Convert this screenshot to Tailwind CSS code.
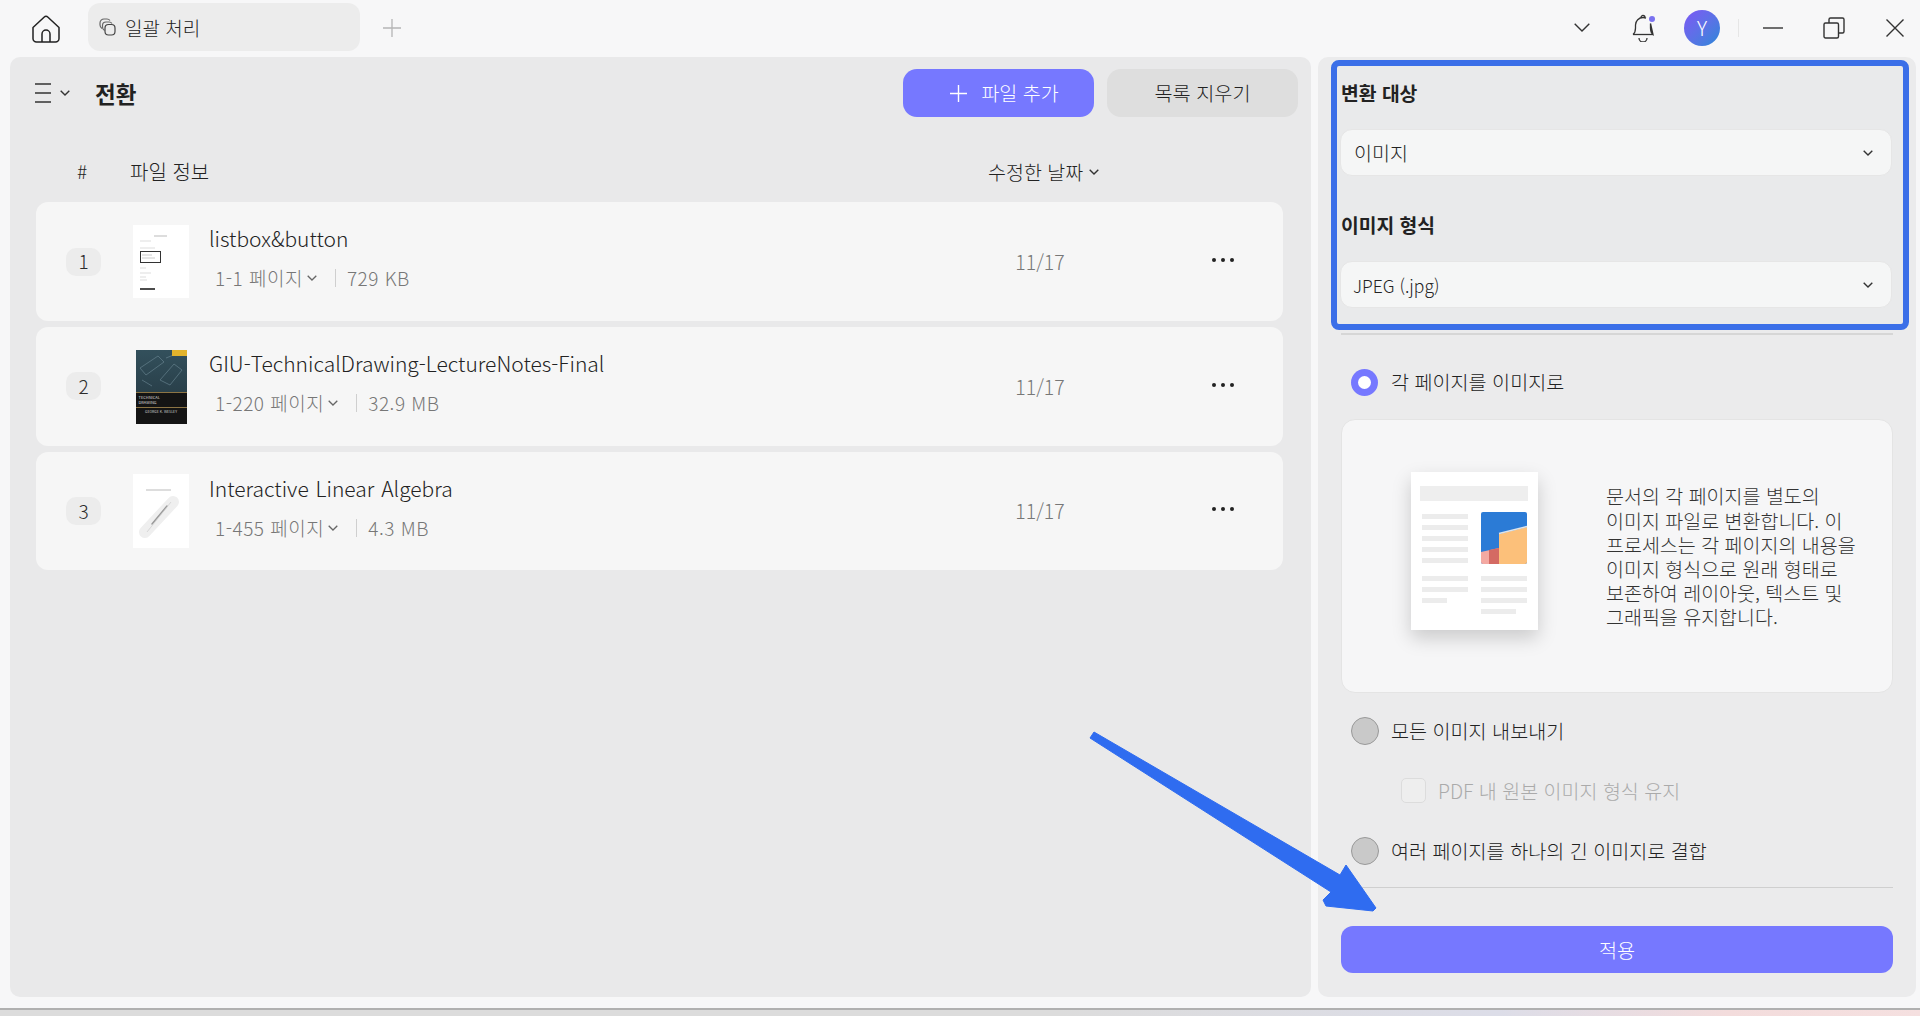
<!doctype html>
<html lang="ko">
<head>
<meta charset="utf-8">
<script src="https://cdn.jsdelivr.net/npm/@tailwindcss/browser@4"></script>
</head>
<body class="m-0 overflow-hidden">
<div class="relative w-[1920px] h-[1016px] bg-[#f7f7f8] flex flex-col overflow-hidden text-[#2b2b2b] font-['Noto_Sans_CJK_KR','Noto_Sans',sans-serif]">

  <!-- title bar -->
  <header class="h-[57px] flex items-center shrink-0">
    <svg class="ml-[32px] w-[28px] h-[28px]" viewBox="0 0 28 28" fill="none" stroke="#222" stroke-width="1.5" stroke-linejoin="round"><path d="M1 12.500 12 2.200a3 3 0 0 1 4 0L27 12.500V23.500a3.500 3.500 0 0 1-3.500 3.500H4.500A3.500 3.500 0 0 1 1 23.500Z"/><path d="M10 27V19a4 4 0 0 1 8 0V27"/></svg>
    <div class="ml-[28px] w-[272px] h-[48px] -mt-[3px] rounded-[12px] bg-[#ececec] flex items-center pl-[10px] gap-[9px]">
      <svg class="w-[18px] h-[18px] shrink-0" viewBox="0 0 18 18" fill="none" stroke="#666" stroke-width="1.2"><path d="M4 10.500A4.500 4.500 0 0 1 2 7V5a4 4 0 0 1 4-4h3a4 4 0 0 1 3 1.500"/><path d="M6.500 12.500A4 4 0 0 1 4.500 9V7.500a3.500 3.500 0 0 1 3.500-3.500h3a3.500 3.500 0 0 1 3 1.500"/><rect x="7" y="6.500" width="10" height="10.500" rx="3.500" stroke="#444"/></svg>
      <span class="text-[19px] leading-none font-light text-[#222]">일괄 처리</span>
    </div>
    <svg class="ml-[23px] -mt-[2px] w-[18px] h-[18px]" viewBox="0 0 18 18" stroke="#b5b5b5" stroke-width="1.3"><path d="M9 0V18M0 9H18"/></svg>
    <div class="ml-auto -mt-[2px] flex items-center">
      <svg class="w-[16px] h-[9px] mr-[42px]" viewBox="0 0 16 9" fill="none" stroke="#333" stroke-width="1.4"><path d="M.7.700 8 8l7.300-7.300"/></svg>
      <div class="relative mr-[30px] w-[22px] h-[28px]">
        <svg class="w-[22px] h-[28px]" viewBox="0 0 22 28" fill="none" stroke="#333" stroke-width="1.3"><path d="M1 20.500c2-1.500 2.500-3 2.500-6.500V11A7.500 7.500 0 0 1 11 3.500a7 7 0 0 1 3 .6M18.500 9.500V14c0 3.500.5 5 2.500 6.500Z"/><path d="M1 20.500H21"/><path d="M9 3.500a2 2 0 0 1 4 0"/><path d="M7 24a4 4 0 0 0 8 0"/></svg>
        <span class="absolute right-[-1px] top-[2px] w-[6px] h-[6px] rounded-full bg-[#7a72f0]"></span>
      </div>
      <div class="w-[36px] h-[36px] rounded-full bg-linear-to-br from-[#7b56f5] to-[#1f86d8] text-white flex items-center justify-center text-[20px] font-light">Y</div>
      <span class="ml-[18px] w-px h-[18px] bg-[#e6e6e6]"></span>
      <svg class="ml-[24px] w-[20px] h-[2px]" viewBox="0 0 20 2"><path d="M0 1H20" stroke="#333" stroke-width="1.4"/></svg>
      <svg class="ml-[40px] w-[22px] h-[22px]" viewBox="0 0 22 22" fill="none" stroke="#333" stroke-width="1.4"><rect x="1" y="6" width="14.500" height="15" rx="1.500"/><path d="M6 6V2.500A1.500 1.500 0 0 1 7.500 1H19.500A1.500 1.500 0 0 1 21 2.500V14.500A1.500 1.500 0 0 1 19.500 16H15.500"/></svg>
      <svg class="ml-[41px] mr-[16px] w-[18px] h-[18px]" viewBox="0 0 18 18" stroke="#333" stroke-width="1.4"><path d="M.5.5 17.500 17.500M17.500.5.5 17.500"/></svg>
    </div>
  </header>

  <!-- body -->
  <main class="h-[940px] shrink-0 flex pl-[10px] pr-[4px] gap-[7px]">
    <!-- left panel -->
    <section class="w-[1301px] rounded-[10px] bg-[#e9e9ea] flex flex-col">
      <div class="h-[60px] mt-[6px] flex items-center pl-[25px] pr-[13px] shrink-0">
        <svg class="w-[16px] h-[20px]" viewBox="0 0 16 20" stroke="#333" stroke-width="1.4"><path d="M0 1H16M0 10H16M0 19H16"/></svg>
        <svg class="ml-[9px] w-[10px] h-[6px]" viewBox="0 0 10 6" fill="none" stroke="#333" stroke-width="1.4"><path d="M.7.700 5 5 9.300.700"/></svg>
        <h1 class="ml-[25px] text-[22.500px] font-bold leading-none text-[#222]">전환</h1>
        <button class="ml-auto w-[191px] h-[48px] rounded-[14px] bg-[#7678ff] text-white text-[19.500px] font-light flex items-center justify-center gap-[14px] pl-[12px]">
          <svg class="w-[17px] h-[17px]" viewBox="0 0 17 17" stroke="#fff" stroke-width="1.4"><path d="M8.500 0V17M0 8.500H17"/></svg>파일 추가
        </button>
        <button class="ml-[13px] w-[191px] h-[48px] rounded-[14px] bg-[#dedede] text-[#222] text-[19.700px] font-light">목록 지우기</button>
      </div>
      <div class="h-[79px] pt-[18px] flex items-center font-light text-[#222] shrink-0">
        <span class="ml-[67px] w-[53px] text-[19px]">#</span>
        <span class="w-[858px] text-[20px]">파일 정보</span>
        <span class="text-[19.500px]">수정한 날짜</span>
        <svg class="ml-[6px] w-[10px] h-[6px]" viewBox="0 0 10 6" fill="none" stroke="#333" stroke-width="1.4"><path d="M.7.700 5 5 9.300.700"/></svg>
      </div>
      <div class="ml-[26px] w-[1247px] flex flex-col gap-[6px]">

        <article class="h-[119px] rounded-[12px] bg-[#f6f6f6] flex items-center">
          <span class="ml-[30px] w-[35px] h-[28px] rounded-[10px] bg-[#ececec] flex items-center justify-center text-[19px] font-light">1</span>
          <div class="ml-[32px] w-[56px] h-[73px] bg-white shrink-0 flex items-start justify-center">
            <svg class="w-[56px] h-[73px] blur-[0.4px]" viewBox="0 0 56 73" fill="none"><path d="M21 11H34" stroke="#bbb"/><path d="M7 16H18M7 23H22" stroke="#ddd"/><rect x="7.500" y="26.500" width="20" height="11" stroke="#333" stroke-width="1"/><path d="M9 30H19M9 33H22" stroke="#ccc"/><path d="M7 43H13M7 48H18M7 52H13M7 55H14" stroke="#ddd"/><path d="M7 64H22" stroke="#111" stroke-width="1.500"/></svg>
          </div>
          <div class="ml-[20px] flex-1 min-w-0 self-stretch flex flex-col justify-center pb-[9px]">
            <h2 class="text-[21px] leading-[28px] font-light text-[#222]">listbox&amp;button</h2>
            <p class="mt-[14px] ml-[6px] flex items-center text-[19px] tracking-[0.5px] leading-[24px] font-light text-[#777]">1-1 페이지<svg class="ml-[4px] w-[10px] h-[6px]" viewBox="0 0 10 6" fill="none" stroke="#666" stroke-width="1.3"><path d="M.7.700 5 5 9.300.700"/></svg><span class="ml-[18px] mr-[11px] w-px h-[18px] bg-[#cfcfcf]"></span>729 KB</p>
          </div>
          <span class="w-[120px] text-center text-[19.500px] font-light text-[#777]">11/17</span>
          <span class="ml-[112px] mr-[49px] w-[22px] flex justify-between -mt-[4px]"><i class="w-[4px] h-[4px] rounded-full bg-[#222]"></i><i class="w-[4px] h-[4px] rounded-full bg-[#222]"></i><i class="w-[4px] h-[4px] rounded-full bg-[#222]"></i></span>
        </article>

        <article class="h-[119px] rounded-[12px] bg-[#f6f6f6] flex items-center">
          <span class="ml-[30px] w-[35px] h-[28px] -mt-[1px] rounded-[10px] bg-[#ececec] flex items-center justify-center text-[19px] font-light">2</span>
          <div class="ml-[32px] w-[56px] h-[74px] shrink-0 flex justify-center">
            <div class="relative w-[51px] h-[74px] bg-linear-to-b from-[#33505c] to-[#22343d] overflow-hidden">
              <svg class="w-[51px] h-[44px]" viewBox="0 0 51 44" fill="none" stroke="#6d8a95" stroke-width=".6"><path d="M4 18 22 6l6 6-18 13ZM24 30l14-16 8 6-12 15ZM6 30l10 6M30 8l10-4"/></svg>
              <span class="absolute right-0 top-0 w-[15px] h-[6px] bg-[#e2b32c]"></span>
              <div class="absolute left-0 right-0 top-[42px] bottom-0 bg-[#141414] border-t border-t-[#8c7444]">
                <p class="mt-[2px] ml-[3px] text-[4px] leading-[5px] text-[#ddd]">TECHNICAL<br>DRAWING</p>
                <p class="mt-[2px] border-t border-t-[#8c7444] pt-[2px] text-center text-[3.500px] leading-[4px] text-[#ccc]">GEORGE K. WESLEY</p>
              </div>
            </div>
          </div>
          <div class="ml-[20px] flex-1 min-w-0 self-stretch flex flex-col justify-center pb-[9px]">
            <h2 class="text-[21px] leading-[28px] font-light text-[#222]">GIU-TechnicalDrawing-LectureNotes-Final</h2>
            <p class="mt-[14px] ml-[6px] flex items-center text-[19px] tracking-[0.5px] leading-[24px] font-light text-[#777]">1-220 페이지<svg class="ml-[4px] w-[10px] h-[6px]" viewBox="0 0 10 6" fill="none" stroke="#666" stroke-width="1.3"><path d="M.7.700 5 5 9.300.700"/></svg><span class="ml-[18px] mr-[11px] w-px h-[18px] bg-[#cfcfcf]"></span>32.9 MB</p>
          </div>
          <span class="w-[120px] text-center text-[19.500px] font-light text-[#777]">11/17</span>
          <span class="ml-[112px] mr-[49px] w-[22px] flex justify-between -mt-[4px]"><i class="w-[4px] h-[4px] rounded-full bg-[#222]"></i><i class="w-[4px] h-[4px] rounded-full bg-[#222]"></i><i class="w-[4px] h-[4px] rounded-full bg-[#222]"></i></span>
        </article>

        <article class="h-[118px] rounded-[12px] bg-[#f6f6f6] flex items-center">
          <span class="ml-[30px] w-[35px] h-[28px] rounded-[10px] bg-[#ececec] flex items-center justify-center text-[19px] font-light">3</span>
          <div class="ml-[32px] w-[56px] h-[74px] bg-white shrink-0">
            <svg class="w-[56px] h-[74px] blur-[0.6px]" viewBox="0 0 56 74" fill="none"><path d="M13 16H38" stroke="#aaa" stroke-width=".8"/><path d="M12 58 40 28" stroke="#efefef" stroke-width="12" stroke-linecap="round"/><path d="M19 50 34 32" stroke="#999" stroke-width="1.500" stroke-linecap="round"/><path d="M14 58 38 28" stroke="#ccc" stroke-width=".7"/></svg>
          </div>
          <div class="ml-[20px] flex-1 min-w-0 self-stretch flex flex-col justify-center pb-[9px]">
            <h2 class="text-[21px] leading-[28px] font-light text-[#222] [word-spacing:1px]">Interactive Linear Algebra</h2>
            <p class="mt-[14px] ml-[6px] flex items-center text-[19px] tracking-[0.5px] leading-[24px] font-light text-[#777]">1-455 페이지<svg class="ml-[4px] w-[10px] h-[6px]" viewBox="0 0 10 6" fill="none" stroke="#666" stroke-width="1.3"><path d="M.7.700 5 5 9.300.700"/></svg><span class="ml-[18px] mr-[11px] w-px h-[18px] bg-[#cfcfcf]"></span>4.3 MB</p>
          </div>
          <span class="w-[120px] text-center text-[19.500px] font-light text-[#777]">11/17</span>
          <span class="ml-[112px] mr-[49px] w-[22px] flex justify-between -mt-[4px]"><i class="w-[4px] h-[4px] rounded-full bg-[#222]"></i><i class="w-[4px] h-[4px] rounded-full bg-[#222]"></i><i class="w-[4px] h-[4px] rounded-full bg-[#222]"></i></span>
        </article>
      </div>
    </section>

    <!-- right panel -->
    <aside class="w-[598px] rounded-[10px] bg-[#ebebec] flex flex-col pt-[3px] pl-[13px] pr-[7px]">
      <div class="w-[578px] h-[270px] shrink-0 rounded-[8px] border-[6px] border-[#3b6fe8] bg-[#e9eaeb] px-[3px] flex flex-col">
        <h3 class="mt-[14px] ml-[1px] text-[19.300px] leading-[26px] font-bold text-[#222]">변환 대상</h3>
        <div class="mt-[23px] w-[552px] h-[47px] rounded-[12px] bg-[#f5f6f6] border border-[#e6e6e6] flex items-center pl-[13px] pr-[18px] text-[19.500px] font-light text-[#222]">이미지
          <svg class="ml-auto w-[10px] h-[6px]" viewBox="0 0 10 6" fill="none" stroke="#333" stroke-width="1.4"><path d="M.7.700 5 5 9.300.700"/></svg>
        </div>
        <h3 class="mt-[36px] ml-[1px] text-[19.300px] leading-[26px] font-bold text-[#222]">이미지 형식</h3>
        <div class="mt-[23px] w-[552px] h-[47px] rounded-[12px] bg-[#f5f6f6] border border-[#e6e6e6] flex items-center pl-[12px] pr-[18px] text-[17.500px] font-light text-[#222]"><span class="mt-[3px]">JPEG (.jpg)</span>
          <svg class="ml-auto w-[10px] h-[6px]" viewBox="0 0 10 6" fill="none" stroke="#333" stroke-width="1.4"><path d="M.7.700 5 5 9.300.700"/></svg>
        </div>
      </div>
      <div class="mt-[3px] ml-[10px] w-[552px] h-[2px] bg-[#d6d6d6] shrink-0"></div>

      <label class="mt-[33px] ml-[20px] flex items-center h-[28px] text-[19.600px] font-light text-[#222]">
        <span class="w-[27px] h-[27px] rounded-full bg-[#7678ff] flex items-center justify-center"><i class="w-[13px] h-[13px] rounded-full bg-white"></i></span>
        <span class="ml-[13px]">각 페이지를 이미지로</span>
      </label>

      <div class="mt-[23px] ml-[10px] w-[552px] h-[274px] shrink-0 rounded-[14px] bg-[#f6f6f7] border border-[#e4e4e4] flex items-center">
        <div class="relative ml-[69px] w-[127px] h-[158px] bg-white shadow-[0_8px_18px_rgba(0,0,0,0.18)] shrink-0 -mt-[10px]">
          <svg class="w-[127px] h-[158px]" viewBox="0 0 127 158"><rect x="9" y="14" width="108" height="15" fill="#eeeeee"/><g fill="#ececec"><rect x="11" y="42" width="46" height="5"/><rect x="11" y="53" width="46" height="5"/><rect x="11" y="64" width="46" height="5"/><rect x="11" y="75" width="46" height="5"/><rect x="11" y="86" width="46" height="5"/><rect x="11" y="104" width="46" height="5"/><rect x="11" y="115" width="46" height="5"/><rect x="11" y="126" width="25" height="5"/><rect x="70" y="104" width="46" height="5"/><rect x="70" y="115" width="46" height="5"/><rect x="70" y="126" width="46" height="5"/><rect x="70" y="137" width="35" height="5"/></g><rect x="70" y="40" width="46" height="52" rx="2" fill="#2b7bd6"/><path d="M88 62 116 55V90a2 2 0 0 1-2 2H88Z" fill="#fcc07a"/><path d="M88 61.500 116 54.500" stroke="#dfe4ea" stroke-width="1.500"/><path d="M70 80 88 76V92H72a2 2 0 0 1-2-2Z" fill="#f4a9a2"/><path d="M78 78 88 76V92H78Z" fill="#d46a63"/></svg>
        </div>
        <p class="ml-[68px] mt-[2px] whitespace-nowrap text-[19.500px] leading-[24.200px] font-light text-[#333]">문서의 각 페이지를 별도의<br>이미지 파일로 변환합니다. 이<br>프로세스는 각 페이지의 내용을<br>이미지 형식으로 원래 형태로<br>보존하여 레이아웃, 텍스트 및<br>그래픽을 유지합니다.</p>
      </div>

      <label class="mt-[24px] ml-[20px] flex items-center h-[28px] text-[19.600px] font-light text-[#222]">
        <span class="w-[28px] h-[28px] rounded-full bg-[#c9c9c9] border border-[#999]"></span>
        <span class="ml-[12px]">모든 이미지 내보내기</span>
      </label>
      <label class="mt-[33px] ml-[70px] flex items-center h-[25px] text-[19.500px] font-light text-[#aaa]">
        <span class="w-[25px] h-[25px] rounded-[5px] border border-[#dcdcdc] bg-[#eeeeee]"></span>
        <span class="ml-[12px]">PDF 내 원본 이미지 형식 유지</span>
      </label>
      <label class="mt-[34px] ml-[20px] flex items-center h-[28px] text-[19.600px] font-light text-[#222]">
        <span class="w-[28px] h-[28px] rounded-full bg-[#c9c9c9] border border-[#999]"></span>
        <span class="ml-[12px]">여러 페이지를 하나의 긴 이미지로 결합</span>
      </label>
      <div class="mt-[22px] ml-[10px] w-[552px] h-px bg-[#cfcfcf] shrink-0"></div>
      <button class="mt-[38px] ml-[10px] w-[552px] h-[47px] shrink-0 rounded-[12px] bg-[#7678ff] text-white text-[19.700px] font-light">적용</button>
    </aside>
  </main>

  <!-- bottom strip -->
  <div class="mt-[11px] h-[8px] shrink-0 border-t-2 border-t-[#b0b0b0] bg-[linear-gradient(90deg,#dcdcdc_0%,#dcdcdc_55%,#dcdde8_78%,#f3dcdc_90%,#f5e0e0_100%)]"></div>

  <!-- annotation arrow -->
  <svg class="absolute left-0 top-0 w-[1920px] h-[1016px] pointer-events-none" viewBox="0 0 1920 1016"><path d="M1094 732 1340 875 1346 865 1376 908 1373 911 1326 906 1323 900 1331 892 1090 738Z" fill="#2f6cf0" stroke="#2f6cf0" stroke-linejoin="round"/></svg>
</div>
</body>
</html>
